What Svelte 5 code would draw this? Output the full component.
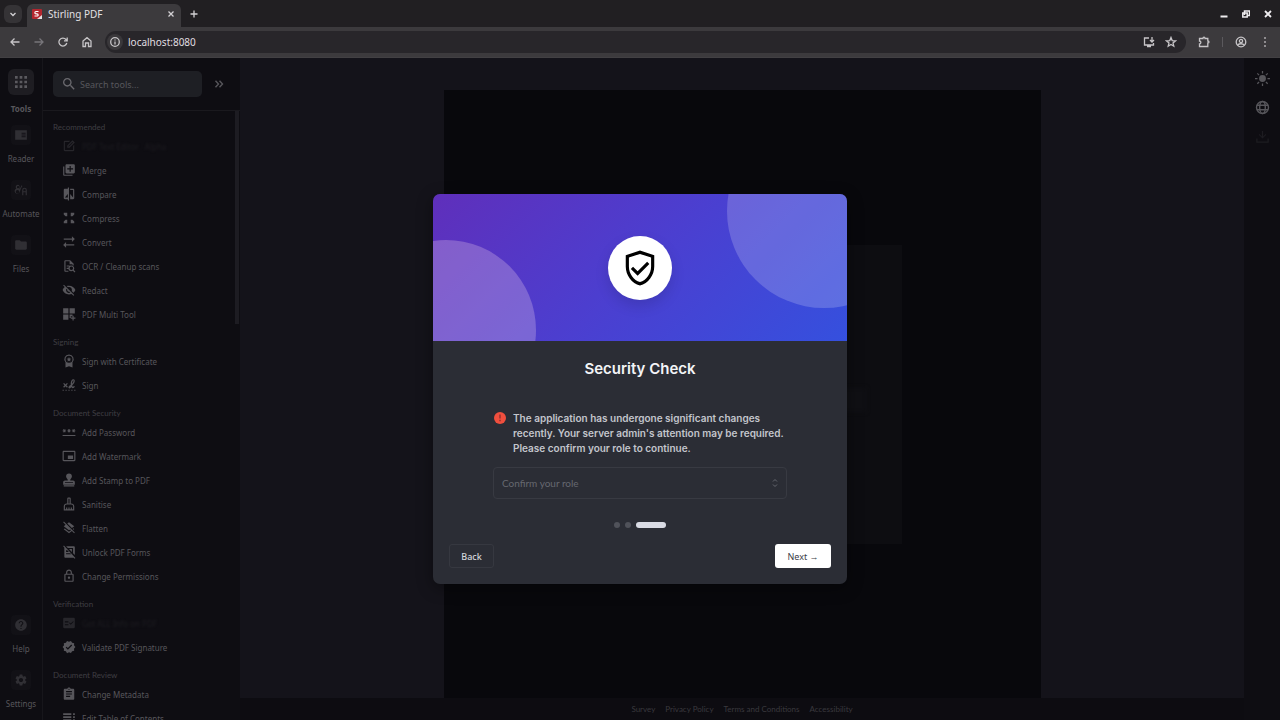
<script>
	const icons = {
		edit: "M5 3h9l-2 2H5v14h14v-7l2-2v9c0 1.1-.9 2-2 2H5c-1.1 0-2-.9-2-2V5c0-1.1.9-2 2-2zm4 12v-4l9-9 4 4-9 9H9zm2-2h1l7-7-1-1-7 7v1z",
		merge: "M4 6H2v14c0 1.1.9 2 2 2h14v-2H4V6zm16-4H8c-1.1 0-2 .9-2 2v12c0 1.1.9 2 2 2h12c1.1 0 2-.9 2-2V4c0-1.1-.9-2-2-2zm-1 9h-4v4h-2v-4H9V9h4V5h2v4h4v2z",
		compare: "M10 3H5c-1.1 0-2 .9-2 2v14c0 1.1.9 2 2 2h5v2h2V1h-2v2zm0 15H5l5-6v6zm9-15h-5v2h5v13l-5-6v9h5c1.1 0 2-.9 2-2V5c0-1.1-.9-2-2-2z",
		compress: "M3 3h6v6H6L3 6zM15 3h6v3l-3 3h-3zM3 18l3-3h3v6H3zM15 15h3l3 3v3h-6z",
		convert: "M17 2l5 5-5 5V8H3V6h14V2zM7 12v4h14v2H7v4l-5-5 5-5z",
		ocr: "M14 2H6c-1.1 0-2 .9-2 2v16c0 1.1.9 2 2 2h5v-2H6V4h7v5h5v2h2V8l-6-6zM8 11h5v2H8zm0 4h3v2H8zm8-4a5 5 0 1 0 2.6 9.200L21.500 23l1.500-1.500-2.800-2.800A5 5 0 0 0 16 11zm0 2a3 3 0 1 1 0 6 3 3 0 0 1 0-6z",
		redact: "M12 7c2.760 0 5 2.240 5 5 0 .65-.13 1.260-.36 1.830l2.920 2.920c1.510-1.260 2.700-2.890 3.430-4.750-1.730-4.390-6-7.500-11-7.500-1.400 0-2.740.25-3.980.7l2.160 2.160C10.740 7.130 11.350 7 12 7zM2 4.270l2.280 2.280.46.46C3.080 8.300 1.780 10.020 1 12c1.730 4.390 6 7.500 11 7.500 1.550 0 3.030-.3 4.380-.84l.42.42L19.730 22 21 20.730 3.270 3 2 4.270zM7.530 9.800l1.550 1.550c-.05.21-.08.43-.08.65 0 1.660 1.340 3 3 3 .22 0 .44-.03.65-.08l1.550 1.550c-.67.33-1.410.53-2.200.53-2.760 0-5-2.240-5-5 0-.79.2-1.530.53-2.200z",
		multi: "M2 2h9v9H2zM13 2h9v9h-9zM2 13h9v9H2zM13 13h5v3h-3v3h-2zM18 15h2v3h3v2h-3v3h-2v-3h-3v-2h3z",
		certificate: "M12 1a8 8 0 0 0-6 13.300V23l6-2 6 2v-8.700A8 8 0 0 0 12 1zm0 2a6 6 0 1 1 0 12 6 6 0 0 1 0-12zm0 2l1.200 2.700 2.800.3-2.100 2 .6 3-2.500-1.500L9.500 13l.6-3L8 8l2.800-.3z",
		sign: "M1 20h2v2H1zm5 0h2v2H6zm5 0h2v2h-2zm5 0h2v2h-2zm5 0h2v2h-2zM2 10l1.500-1.500L6 11l2.500-2.500L10 10l-2.500 2.500L10 15l-1.500 1.500L6 14l-2.500 2.500L2 15l2.500-2.500zM13 18c-2 0-2.500-2-1.500-3.500.8-1.200 2-2 3.500-2.500-.5-6 1.500-10 4.500-10 3.500 0 3.500 6-2 10.500.3 1.300.6 2.500 1 2.500.8 0 1.500-1 2-1.700L22 15c-1 1.500-2 2.500-3.500 2.500-1.300 0-2-1-2.500-2-1 1.700-2 2.500-3 2.500zm4.300-8C20 7 20.300 4 19.500 4c-1 0-2.300 2.500-2.200 6z",
		password: "M1 17h22v2H1v-2zm2.150-4.050L4 11.470l.85 1.480 1.300-.75-.85-1.480H7v-1.500H5.300l.85-1.470L4.850 7 4 8.470 3.150 7l-1.300.75.85 1.470H1v1.500h1.700l-.85 1.480 1.300.75zm6.700-.75l1.300.75.85-1.480.85 1.480 1.300-.75-.85-1.480H15v-1.500h-1.700l.85-1.470-1.300-.75L12 8.470 11.150 7l-1.300.75.85 1.470H9v1.500h1.700l-.85 1.480zM23 9.220h-1.700l.85-1.470-1.300-.75L20 8.470 19.150 7l-1.300.75.85 1.470H17v1.500h1.700l-.85 1.480 1.300.75.85-1.480.85 1.480 1.300-.75-.85-1.480H23v-1.500z",
		watermark: "M21 3H3c-1.100 0-2 .9-2 2v14c0 1.100.9 2 2 2h18c1.100 0 2-.9 2-2V5c0-1.100-.9-2-2-2zm0 16H3V5h18v14zm-11-8h9v6h-9z",
		stamp: "M12 1a5 5 0 0 0-5 5c0 3 3 3.500 3 7H5c-1.700 0-3 1.300-3 3v4h20v-4c0-1.700-1.300-3-3-3h-5c0-3.500 3-4 3-7a5 5 0 0 0-5-5zM5 16h14v1H5zM3 21h18v2H3z",
		sanitise: "M16 11h-1V3c0-1.100-.9-2-2-2h-2c-1.100 0-2 .9-2 2v8H8c-2.760 0-5 2.240-5 5v7h18v-7c0-2.760-2.240-5-5-5zm3 10h-2v-3h-2v3h-2v-3h-2v3H9v-3H7v3H5v-5c0-1.650 1.350-3 3-3h8c1.650 0 3 1.350 3 3v5zM11 3h2v8h-2z",
		flatten: "M19.810 14.990l1.190-.92-1.430-1.430-1.190.92 1.430 1.430zM19.360 10.270L21 9l-9-7-2.910 2.270 7.870 7.880 2.400-1.880zM3.270 1L2 2.270l4.220 4.220L3 9l9 7 2.100-1.630 1.420 1.430L12 18.540l-7.370-5.730L3 14.070l9 7 4.950-3.850L20.730 21 22 19.730 3.270 1z",
		unlock: "M3.300 1L2 2.300l2 2V20c0 1.100.9 2 2 2h14l1.700 1.700L23 22.400zM7 9h2l3 3H7zm0 5h7l2 2H7zM7 2l3 3h9v9l3 3V4c0-1.100-.9-2-2-2zM12 7h5v5z",
		lock: "M18 8h-1V6c0-2.760-2.240-5-5-5S7 3.240 7 6v2H6c-1.100 0-2 .9-2 2v10c0 1.100.9 2 2 2h12c1.100 0 2-.9 2-2V10c0-1.100-.9-2-2-2zM9 6c0-1.660 1.340-3 3-3s3 1.340 3 3v2H9V6zm9 14H6V10h12v10zm-6-3c1.100 0 2-.9 2-2s-.9-2-2-2-2 .9-2 2 .9 2 2 2z",
		info: "M20 3H4c-1.100 0-2 .9-2 2v14c0 1.100.9 2 2 2h16c1.100 0 2-.9 2-2V5c0-1.100-.9-2-2-2zM11 16H5v-2h6zm0-5H5V9h6zm4 4l-3-3 1-1 2 2 4-4 1 1z",
		verified: "M23 12l-2.440-2.790.34-3.690-3.610-.82-1.890-3.200L12 2.960 8.600 1.500 6.710 4.690 3.100 5.500l.34 3.700L1 12l2.440 2.790-.34 3.700 3.610.82L8.600 22.500l3.400-1.470 3.400 1.460 1.890-3.190 3.610-.82-.34-3.690L23 12zm-12.910 4.720l-3.800-3.810 1.480-1.480 2.320 2.330 5.850-5.870 1.480 1.480-7.330 7.350z",
		metadata: "M19 3h-4.180C14.400 1.840 13.300 1 12 1c-1.300 0-2.400.84-2.820 2H5c-1.100 0-2 .9-2 2v15c0 1.100.9 2 2 2h14c1.100 0 2-.9 2-2V5c0-1.100-.9-2-2-2zm-7 0c.55 0 1 .45 1 1s-.45 1-1 1-1-.45-1-1 .45-1 1-1zm2 14H7v-2h7v2zm3-4H7v-2h10v2zm0-4H7V7h10v2z",
		contents: "M2 4h14v3H2zM2 9h14v3H2zM2 14h14v3H2zM19 4h3v3h-3zM19 9h3v3h-3zM19 14h3v3h-3z",
		apps: "M3 3h4v4H3zM10 3h4v4h-4zM17 3h4v4h-4zM3 10h4v4H3zM10 10h4v4h-4zM17 10h4v4h-4zM3 17h4v4H3zM10 17h4v4h-4zM17 17h4v4h-4z",
		reader: "M2 4h20v16H2zM13 8v2h7V8zm0 3v2h7v-2zm0 3v2h7v-2z",
		automate: "M7 3a4 4 0 0 0-3 6.600A4.500 4.500 0 1 0 9.500 16l3-8 2-3L13 4l-3 6-1-1a4 4 0 0 0-2-6zm0 2a2 2 0 1 1 0 4 2 2 0 0 1 0-4zm-1 7a3 3 0 1 1 0 6 3 3 0 0 1 0-6zM18 8a4 4 0 0 0-4 4v9h2v-5h4v5h2v-9a4 4 0 0 0-4-4zm0 2a2 2 0 0 1 2 2v2h-4v-2a2 2 0 0 1 2-2z",
		files: "M10 4H4c-1.100 0-2 .9-2 2v12c0 1.100.9 2 2 2h16c1.100 0 2-.9 2-2V8c0-1.100-.9-2-2-2h-8l-2-2z",
		help: "M12 2C6.480 2 2 6.480 2 12s4.480 10 10 10 10-4.480 10-10S17.520 2 12 2zm1 17h-2v-2h2v2zm2.070-7.750l-.9.920C13.450 12.900 13 13.500 13 15h-2v-.5c0-1.100.45-2.100 1.170-2.830l1.240-1.260c.37-.36.59-.86.59-1.410 0-1.100-.9-2-2-2s-2 .9-2 2H8c0-2.210 1.790-4 4-4s4 1.790 4 4c0 .88-.36 1.680-.93 2.250z",
		settings: "M19.140 12.940c.04-.3.06-.61.06-.94 0-.32-.02-.64-.07-.94l2.030-1.580c.18-.14.23-.41.12-.61l-1.920-3.320c-.12-.22-.37-.29-.59-.22l-2.390.96c-.5-.38-1.030-.7-1.620-.94l-.36-2.540c-.04-.24-.24-.41-.48-.41h-3.840c-.24 0-.43.17-.47.41l-.36 2.540c-.59.24-1.130.57-1.620.94l-2.390-.96c-.22-.08-.47 0-.59.22L2.740 8.870c-.12.21-.08.47.12.61l2.030 1.580c-.05.3-.09.63-.09.94s.02.64.07.94l-2.030 1.580c-.18.14-.23.41-.12.61l1.920 3.320c.12.22.37.29.59.22l2.390-.96c.5.38 1.030.7 1.620.94l.36 2.540c.05.24.24.41.48.41h3.840c.24 0 .44-.17.47-.41l.36-2.540c.59-.24 1.130-.56 1.620-.94l2.390.96c.22.08.47 0 .59-.22l1.920-3.320c.12-.22.07-.47-.12-.61l-2.010-1.580zM12 15.600c-1.980 0-3.600-1.620-3.600-3.600s1.620-3.600 3.600-3.600 3.600 1.620 3.600 3.600-1.620 3.600-3.600 3.600z",
		search: "M15.500 14h-.79l-.28-.27C15.410 12.590 16 11.110 16 9.500 16 5.910 13.090 3 9.500 3S3 5.910 3 9.500 5.910 16 9.500 16c1.610 0 3.090-.59 4.230-1.570l.27.28v.79l5 4.990L20.490 19l-4.990-5zm-6 0C7.010 14 5 11.990 5 9.500S7.010 5 9.500 5 14 7.010 14 9.500 11.990 14 9.500 14z",
		sun: "M12 6.500a5.500 5.500 0 1 0 0 11 5.500 5.500 0 0 0 0-11zM11 0h2v4h-2zM11 20h2v4h-2zM0 11h4v2H0zM20 11h4v2h-4zM3 4.400L4.400 3l2.800 2.800-1.400 1.400zM16.800 18.200l1.400-1.400L21 19.600 19.600 21zM3 19.600l2.800-2.800 1.400 1.400L4.400 21zM16.800 5.800L19.600 3 21 4.400l-2.800 2.800z",
		download: "M11 3h2v9l4-4 1 1-6 6-6-6 1-1 4 4zM2 15h2v5h16v-5h2v7H2z",
		shield: "M12 1L3 4v7c0 5.600 3.800 10.700 9 12 5.200-1.300 9-6.400 9-12V4l-9-3zm7 10c0 4.500-3 8.700-7 9.900-4-1.200-7-5.400-7-9.900V5.400l7-2.300 7 2.300V11zm-11.400.2L6.200 12.600l4.300 4.300 7.400-7.400-1.400-1.400-6 6z",
	};

	const railTop = [
		{ name: "Tools", icon: "apps", active: true },
		{ name: "Reader", icon: "reader" },
		{ name: "Automate", icon: "automate" },
		{ name: "Files", icon: "files" },
	];
	const railBottom = [
		{ name: "Help", icon: "help" },
		{ name: "Settings", icon: "settings" },
	];

	const groups = [
		{
			title: "Recommended",
			tools: [
				{ name: "PDF Text Editor", icon: "edit", badge: "Alpha", disabled: true },
				{ name: "Merge", icon: "merge" },
				{ name: "Compare", icon: "compare" },
				{ name: "Compress", icon: "compress" },
				{ name: "Convert", icon: "convert" },
				{ name: "OCR / Cleanup scans", icon: "ocr" },
				{ name: "Redact", icon: "redact" },
				{ name: "PDF Multi Tool", icon: "multi" },
			],
		},
		{
			title: "Signing",
			tools: [
				{ name: "Sign with Certificate", icon: "certificate" },
				{ name: "Sign", icon: "sign" },
			],
		},
		{
			title: "Document Security",
			tools: [
				{ name: "Add Password", icon: "password" },
				{ name: "Add Watermark", icon: "watermark" },
				{ name: "Add Stamp to PDF", icon: "stamp" },
				{ name: "Sanitise", icon: "sanitise" },
				{ name: "Flatten", icon: "flatten" },
				{ name: "Unlock PDF Forms", icon: "unlock" },
				{ name: "Change Permissions", icon: "lock" },
			],
		},
		{
			title: "Verification",
			tools: [
				{ name: "Get ALL Info on PDF", icon: "info", disabled: true },
				{ name: "Validate PDF Signature", icon: "verified" },
			],
		},
		{
			title: "Document Review",
			tools: [
				{ name: "Change Metadata", icon: "metadata" },
				{ name: "Edit Table of Contents", icon: "contents" },
			],
		},
	];

	const footerLinks = ["Survey", "Privacy Policy", "Terms and Conditions", "Accessibility"];

	let url = $state("localhost:8080");
	let search = $state("");
	let role = $state("");
</script>

{#snippet icon(name, size = 14)}
	<svg width={size} height={size} viewBox="0 0 24 24" fill="currentColor" fill-rule="evenodd" aria-hidden="true"><path d={icons[name]} /></svg>
{/snippet}

{#snippet railItem(item)}
	<button class="rail-item" class:active={item.active}>
		<span class="rail-icon">{@render icon(item.icon, item.active ? 16 : 14)}</span>
		<span>{item.name}</span>
	</button>
{/snippet}

<div class="window">
	<header class="tab-strip">
		<button class="tab-search" aria-label="Search tabs">
			<svg width="8" height="8" viewBox="0 0 8 8"><path d="M1.500 3L4 5.500 6.500 3" /></svg>
		</button>
		<div class="tab">
			<svg width="10" height="10" viewBox="0 0 10 10" aria-hidden="true">
				<rect width="10" height="10" rx="1" fill="#b3262f" />
				<path d="M10 6v4H5z" fill="#e6dfe1" />
				<path d="M6.500 2.500H4C2.500 2.500 2.500 4.800 4 4.800h1c1.500 0 1.500 2.200 0 2.200H2.500" fill="none" stroke="#fff" stroke-width="1.200" />
			</svg>
			<span class="tab-title">Stirling PDF</span>
			<button aria-label="Close tab">
				<svg width="8" height="8" viewBox="0 0 8 8"><path d="M1.500 1.500l5 5M6.500 1.500l-5 5" /></svg>
			</button>
		</div>
		<button class="new-tab" aria-label="New tab">
			<svg width="8" height="8" viewBox="0 0 8 8"><path d="M4 .5v7M.5 4h7" /></svg>
		</button>
		<div class="window-buttons">
			<button aria-label="Minimise"><svg width="8" height="8" viewBox="0 0 8 8"><path d="M.5 6.500h7" stroke-width="2" /></svg></button>
			<button aria-label="Restore">
				<svg width="8" height="8" viewBox="0 0 8 8"><path d="M2.500 5V1h5v4.500h-2M.8 3h4.400v4H.8z" stroke-width="1.500" /></svg>
			</button>
			<button aria-label="Close"><svg width="8" height="8" viewBox="0 0 8 8"><path d="M1 1l6 6M7 1L1 7" stroke-width="1.800" /></svg></button>
		</div>
	</header>

	<div class="toolbar">
		<button aria-label="Back"><svg width="12" height="12" viewBox="0 0 12 12"><path d="M10.500 6H2M5.500 2.500L2 6l3.500 3.500" /></svg></button>
		<button class="dim" aria-label="Forward"><svg width="12" height="12" viewBox="0 0 12 12"><path d="M1.500 6H10M6.500 2.500L10 6 6.500 9.500" /></svg></button>
		<button aria-label="Reload">
			<svg width="12" height="12" viewBox="0 0 12 12"><path d="M9.800 7A4 4 0 1 1 9 3.500l1 1M10.200 1.500v3.300H7" /></svg>
		</button>
		<button aria-label="Home">
			<svg width="12" height="12" viewBox="0 0 12 12"><path d="M2 10.500V5l4-3.300L10 5v5.500H7.500V7h-3v3.500z" /></svg>
		</button>
		<div class="omnibox">
			<span class="site-info">
				<svg width="12" height="12" viewBox="0 0 12 12"><circle cx="6" cy="6" r="4.300" /><path d="M6 5.500v3M6 3.500v1" /></svg>
			</span>
			<input type="text" aria-label="Address" bind:value={url} />
			<button aria-label="Install app">
				<svg width="12" height="12" viewBox="0 0 12 12"><path d="M6 2H1.500v7h9V7M4 10.500h4M9 1v5M7 4l2 2 2-2" /></svg>
			</button>
			<button aria-label="Bookmark">
				<svg width="12" height="12" viewBox="0 0 12 12"><path d="M6 1.500l1.200 3.100 3.300.2L8 6.900l.8 3.300L6 8.500l-2.800 1.700L4 6.900 1.500 4.800l3.300-.2z" /></svg>
			</button>
		</div>
		<div class="toolbar-end">
			<button aria-label="Extensions">
				<svg width="12" height="12" viewBox="0 0 12 12"><path d="M1.500 2.500H5c0-1.800 2-1.800 2 0h2.800V5c1.600 0 1.600 2 0 2v3.500H1.500V8C3.300 8 3.300 5 1.500 5z" /></svg>
			</button>
			<span class="divider"></span>
			<button aria-label="Profile">
				<svg width="12" height="12" viewBox="0 0 12 12"><circle cx="6" cy="6" r="4.800" /><circle cx="6" cy="5" r="1.600" /><path d="M2.800 9c1.500-1.700 5-1.700 6.400 0" /></svg>
			</button>
			<button aria-label="Menu">
				<svg width="12" height="12" viewBox="0 0 12 12"><path d="M6 1.200v1.600M6 5.200v1.600M6 9.200v1.600" stroke-width="1.600" /></svg>
			</button>
		</div>
	</div>

	<div class="app">
		<nav class="rail">
			{#each railTop as item}
				{@render railItem(item)}
			{/each}
			<div class="spacer"></div>
			{#each railBottom as item}
				{@render railItem(item)}
			{/each}
		</nav>

		<aside class="panel">
			<div class="panel-head">
				<label class="search">
					{@render icon("search", 16)}
					<input type="text" placeholder="Search tools..." aria-label="Search tools" bind:value={search} />
				</label>
				<button class="collapse" aria-label="Collapse">
					<svg width="10" height="10" viewBox="0 0 10 10"><path d="M1.500 1.800l3 3.200-3 3.200M5.500 1.800l3 3.200-3 3.200" /></svg>
				</button>
			</div>
			<div class="tool-list">
				{#each groups as group}
					<h2>{group.title}</h2>
					{#each group.tools as tool}
						<button class="tool" disabled={tool.disabled}>
							{@render icon(tool.icon)}
							<span class="tool-name">{tool.name}</span>
							{#if tool.badge}<span class="tool-name">{tool.badge}</span>{/if}
						</button>
					{/each}
				{/each}
			</div>
		</aside>

		<main class="workbench">
			<div class="page">
				<div class="drop-card"><div class="drop-hint"></div></div>
			</div>
			<footer>
				{#each footerLinks as link}
					<a href="#{link}">{link}</a>
				{/each}
			</footer>
		</main>

		<aside class="quick">
			<button aria-label="Toggle theme">{@render icon("sun", 15)}</button>
			<button aria-label="Language">
				<svg class="globe" width="15" height="15" viewBox="0 0 15 15"><circle cx="7.500" cy="7.500" r="6" /><ellipse cx="7.500" cy="7.500" rx="2.800" ry="6" /><path d="M2 5.200h11M2 9.800h11" /></svg>
			</button>
			<button class="faint" aria-label="Download" disabled>{@render icon("download", 15)}</button>
		</aside>

		<div class="overlay">
			<div class="modal" role="dialog" aria-labelledby="modal-title">
				<div class="hero">
					<div class="bubble left"></div>
					<div class="bubble right"></div>
					<div class="hero-icon">{@render icon("shield", 38)}</div>
				</div>
				<div class="modal-body">
					<h1 id="modal-title">Security Check</h1>
					<div class="check">
						<div class="message">
							<svg width="12" height="12" viewBox="0 0 12 12" aria-hidden="true">
								<circle cx="6" cy="6" r="6" fill="#f04f3e" />
								<path d="M6 2.500v4M6 7.800v1.500" stroke="#8d2f2e" stroke-width="1.400" />
							</svg>
							<p>The application has undergone significant changes recently. Your server admin's attention may be required. Please confirm your role to continue.</p>
						</div>
						<div class="role">
							<select aria-label="Confirm your role" bind:value={role}>
								<option value="">Confirm your role</option>
								<option value="admin">Admin</option>
								<option value="user">User</option>
							</select>
							<svg width="8" height="10" viewBox="0 0 8 10"><path d="M2 3.500l2-2 2 2M2 6.500l2 2 2-2" /></svg>
						</div>
					</div>
					<div class="steps">
						<span></span>
						<span></span>
						<span class="current"></span>
					</div>
					<div class="actions">
						<button class="back">Back</button>
						<button class="next">Next →</button>
					</div>
				</div>
			</div>
		</div>
	</div>
</div>

<style>
	:global(body) {
		margin: 0;
		background: #0e0d12;
	}
	* {
		box-sizing: border-box;
	}
	button,
	input,
	select {
		margin: 0;
		padding: 0;
		border: none;
		background: none;
		color: inherit;
		font: inherit;
		outline: none;
	}
	button {
		display: flex;
		align-items: center;
		justify-content: center;
	}
	svg {
		display: block;
		flex: none;
	}
	.window {
		display: flex;
		flex-direction: column;
		height: 100vh;
		overflow: hidden;
		font-family: "Noto Sans", "Open Sans", sans-serif;
		font-size: 10px;
	}

	/* browser frame */
	.tab-strip,
	.toolbar {
		display: flex;
		align-items: center;
		flex: none;
		color: #d3d1d4;
	}
	.tab-strip button svg,
	.toolbar svg {
		fill: none;
		stroke: currentColor;
		stroke-width: 1.3;
	}
	.tab-strip {
		height: 27px;
		padding: 0 8px 0 4px;
		background: #211f22;
	}
	.tab-search {
		width: 18px;
		height: 18px;
		border-radius: 6px;
		background: #353336;
	}
	.tab {
		display: flex;
		align-items: center;
		gap: 6px;
		align-self: flex-end;
		width: 154px;
		height: 23px;
		margin-left: 5px;
		padding: 0 6px 4px 5px;
		border-radius: 6px 6px 0 0;
		background: #3c3a3d;
	}
	.tab-title {
		flex: 1;
		color: #e2e0e3;
	}
	.new-tab {
		margin-left: 9px;
	}
	.window-buttons {
		display: flex;
		gap: 14px;
		margin-left: auto;
		color: #eeecef;
	}
	.toolbar {
		height: 31px;
		padding: 0 9px;
		gap: 12px;
		background: #3c3a3d;
		border-bottom: 1px solid #424043;
		color: #c6c4c7;
	}
	.dim {
		color: #77757a;
	}
	.omnibox {
		display: flex;
		align-items: center;
		gap: 10px;
		flex: 1;
		height: 22px;
		padding: 0 9px 0 2px;
		border-radius: 11px;
		background: #28262a;
	}
	.omnibox input {
		flex: 1;
		color: #e0dee1;
	}
	.site-info {
		display: grid;
		place-items: center;
		width: 16px;
		height: 16px;
		margin-right: -5px;
		border-radius: 50%;
		background: #3a383b;
	}
	.toolbar-end {
		display: flex;
		align-items: center;
		gap: 12px;
	}
	.divider {
		width: 1px;
		height: 10px;
		background: #5b595d;
	}

	/* application */
	.app {
		position: relative;
		display: flex;
		flex: 1;
		min-height: 0;
		background: #0e0d12;
		color: #57565b;
	}
	.rail {
		display: flex;
		flex-direction: column;
		gap: 10px;
		width: 43px;
		padding: 11px 0 5px;
		border-right: 1px solid #17161b;
		font-size: 8px;
		line-height: 12px;
	}
	.rail-item {
		flex-direction: column;
		gap: 8px;
		padding-bottom: 5px;
	}
	.rail-item.active {
		padding-bottom: 0;
		font-weight: 700;
	}
	.rail-icon {
		display: grid;
		place-items: center;
		width: 20px;
		height: 20px;
		border-radius: 4px;
		background: #121116;
		color: #302f34;
	}
	.active .rail-icon {
		width: 26px;
		height: 26px;
		border-radius: 6px;
		background: #1e1d22;
		color: #5b5a5f;
	}
	.spacer {
		flex: 1;
	}
	.panel {
		display: flex;
		flex-direction: column;
		width: 197px;
	}
	.panel-head {
		display: flex;
		align-items: center;
		gap: 12px;
		padding: 13px 10px;
		border-bottom: 1px solid #1a191e;
	}
	.search {
		display: flex;
		align-items: center;
		gap: 3px;
		width: 149px;
		height: 26px;
		padding: 0 8px;
		border-radius: 5px;
		background: #1e1f24;
		color: #6a696e;
	}
	.search input {
		flex: 1;
		min-width: 0;
		font-size: 9px;
	}
	.search input::placeholder {
		color: #57575c;
		opacity: 1;
	}
	.collapse svg,
	.globe,
	.role svg {
		fill: none;
		stroke: currentColor;
		stroke-width: 1.4;
	}
	.tool-list {
		position: relative;
		flex: 1;
		min-height: 0;
		overflow: hidden;
	}
	.tool-list::after {
		position: absolute;
		top: 0;
		right: 1px;
		width: 4px;
		height: 213px;
		background: #1d1c22;
		content: "";
	}
	h2 {
		margin: 0;
		padding: 10px 10px 1px;
		color: #3f3e43;
		font-family: Lato, sans-serif;
		font-size: 8px;
		font-weight: 400;
		line-height: 12px;
	}
	.tool {
		justify-content: flex-start;
		gap: 6px;
		width: 100%;
		height: 24px;
		padding-left: 19px;
		font-size: 8px;
	}
	.tool:disabled {
		color: #27262b;
	}
	.tool:disabled .tool-name {
		color: #1d1c21;
		filter: blur(1px);
	}
	.workbench {
		display: flex;
		flex-direction: column;
		align-items: center;
		flex: 1;
		background: #14131a;
	}
	.page {
		flex: 1;
		width: 60%;
		max-width: 597px;
		margin-top: 32px;
		padding-top: 155px;
		background: #08080c;
	}
	.drop-card {
		width: 320px;
		height: 299px;
		margin: 0 auto;
		padding-top: 143px;
		background: #0d0d11;
	}
	.drop-hint {
		width: 248px;
		height: 24px;
		margin: 0 auto;
		background: #101014;
		filter: blur(2px);
	}
	footer {
		display: flex;
		justify-content: center;
		align-items: center;
		gap: 10px;
		width: 100%;
		height: 22px;
		background: #0d0c11;
		font-family: Lato, sans-serif;
		font-size: 8px;
	}
	footer a {
		color: #3a393e;
		text-decoration: none;
	}
	.quick {
		display: flex;
		flex-direction: column;
		align-items: center;
		gap: 14px;
		width: 36px;
		padding-top: 13px;
	}
	.faint {
		color: #1d1c21;
	}

	/* security dialog */
	.overlay {
		position: absolute;
		inset: 0;
		display: grid;
		place-items: center;
	}
	.modal {
		width: 414px;
		max-width: 90%;
		overflow: hidden;
		border-radius: 7px;
		background: #2b2d35;
		box-shadow: 0 4px 16px #00000066;
		font-family: Inter, sans-serif;
	}
	.hero {
		position: relative;
		display: grid;
		place-items: center;
		height: 147px;
		overflow: hidden;
		background: linear-gradient(135deg, #5f2fbb, #4b3fd0 50%, #3550de);
	}
	.bubble {
		position: absolute;
		border-radius: 50%;
		background: #ffffff30;
	}
	.bubble.left {
		top: 46px;
		left: -77px;
		width: 180px;
		height: 180px;
		background: #ffe4f040;
	}
	.bubble.right {
		top: -80px;
		right: -74px;
		width: 194px;
		height: 194px;
	}
	.hero-icon {
		display: grid;
		place-items: center;
		width: 64px;
		height: 64px;
		border-radius: 50%;
		background: #fff;
		box-shadow: 0 6px 14px #00000020;
		color: #000;
	}
	.modal-body {
		padding: 17px 16px 16px;
	}
	h1 {
		margin: 0;
		color: #f3f4f7;
		font-size: 15px;
		font-weight: 600;
		line-height: 22px;
		text-align: center;
	}
	.check {
		margin: 31px 44px 0;
	}
	.message {
		display: flex;
		gap: 7px;
		padding-left: 1px;
	}
	.message svg {
		margin-top: 1px;
	}
	.message p {
		margin: 0;
		color: #c3c5cc;
		font-size: 10px;
		font-weight: 600;
		line-height: 15px;
	}
	.role {
		position: relative;
		margin-top: 11px;
	}
	.role select {
		display: block;
		width: 100%;
		height: 32px;
		padding: 0 8px;
		border: 1px solid #383a42;
		border-radius: 4px;
		appearance: none;
		color: #666870;
		font-family: Lato, sans-serif;
		font-size: 10px;
	}
	.role svg {
		position: absolute;
		top: 11px;
		right: 8px;
		color: #666870;
		stroke-width: 1;
		pointer-events: none;
	}
	.steps {
		display: flex;
		justify-content: center;
		gap: 5px;
		margin-top: 23px;
	}
	.steps span {
		width: 6px;
		height: 6px;
		border-radius: 3px;
		background: #50525a;
	}
	.steps .current {
		width: 30px;
		background: #d9dbe4;
	}
	.actions {
		display: flex;
		justify-content: space-between;
		margin-top: 16px;
		font-family: "Noto Sans", sans-serif;
		font-size: 9px;
	}
	.actions button {
		height: 24px;
		border-radius: 3px;
	}
	.back {
		width: 45px;
		border: 1px solid #363840;
		color: #d4d6dc;
		font-weight: 500;
	}
	.next {
		width: 56px;
		background: #fff;
		color: #3c3e48;
	}
</style>
